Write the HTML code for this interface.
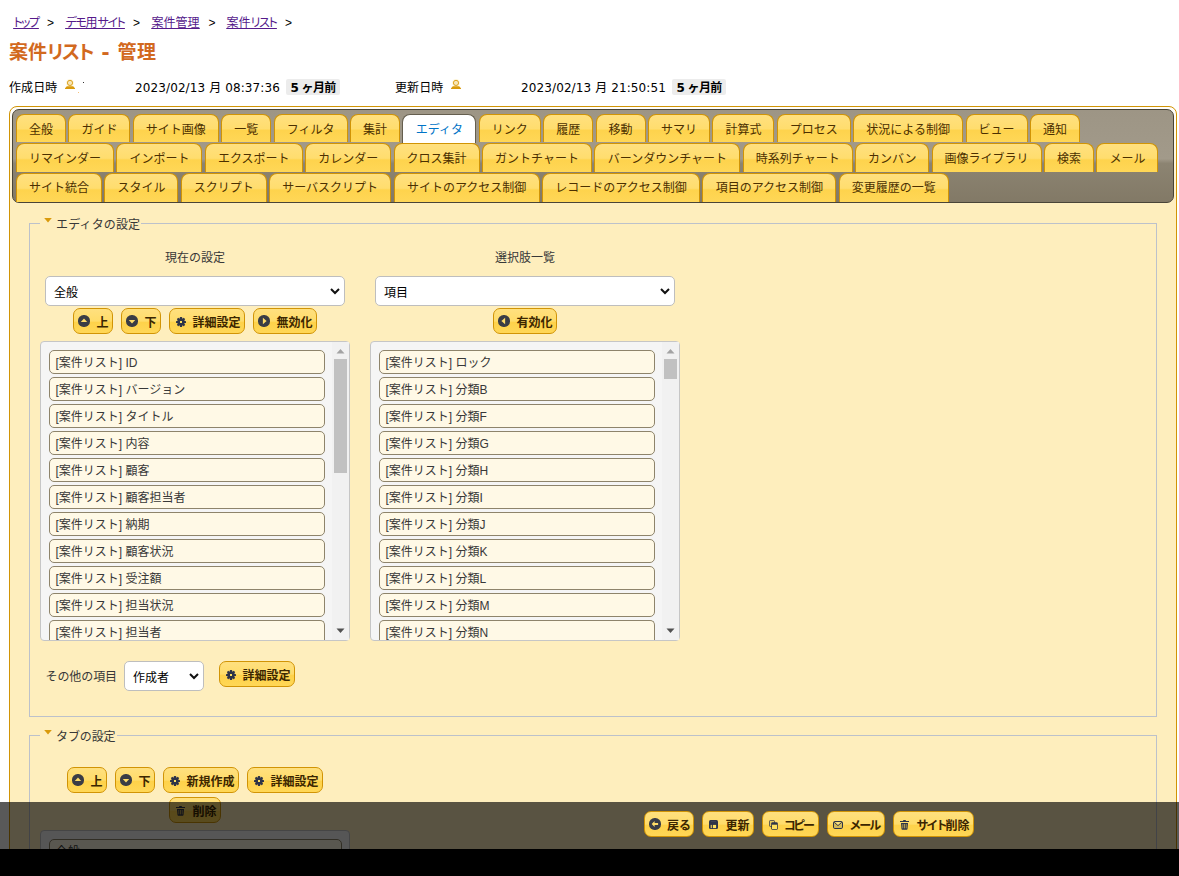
<!DOCTYPE html>
<html lang="ja"><head><meta charset="utf-8"><title>案件リスト - 管理</title>
<style>
html,body{margin:0;padding:0;background:#fff;}
body{width:1179px;height:876px;overflow:hidden;position:relative;font-family:"Liberation Sans","Noto Sans CJK JP",sans-serif;font-size:12px;color:#000;}
div,svg{position:absolute;box-sizing:content-box;}
.t{white-space:nowrap;}
.t span,.t a{position:static;color:inherit;text-decoration:inherit;}
h1{margin:0;padding:0;font:inherit;}
.i{display:block;}
.bc{color:#551a8b;text-decoration:underline;font-feature-settings:"palt";}
.gt{color:#000;}
.h1{font-size:19px;font-weight:bold;color:#d2691e;font-feature-settings:"palt";}
.tx{color:#000;}
.dt{color:#000;font-family:"DejaVu Sans","Noto Sans CJK JP",sans-serif;}
.bd{font-weight:bold;color:#000;font-family:"DejaVu Sans","Noto Sans CJK JP",sans-serif;}
.badge{background:#ececec;border-radius:2px;}
.dot{width:1px;height:1px;background:#333;}
.dot2{width:1px;height:1px;background:#f6c27c;}
.tabs{left:9px;top:106px;width:1166px;height:900px;border:1px solid #d19405;border-radius:8px;background:linear-gradient(rgba(255,255,255,.95),rgba(255,255,255,0) 100px),#feeebd;}
.hdr{left:12px;top:109px;width:1160px;height:92px;border:1px solid #494437;border-radius:7px;background:linear-gradient(#9d9585 0%,#a29a8a 53%,#8c8472 58%,#827966 100%);}
.tab{border:1px solid #d19405;border-bottom:none;border-radius:8px 8px 0 0;background:linear-gradient(#ffe07f 0%,#ffdd6e 51%,#fed34d 57%,#ffd757 100%);}
.tab.act{border-color:#655e4e;background:#fff;}
.tabt{color:#4c3000;}
.actt{color:#0074c7;}
.fs{border:1px solid #bcc1cb;}
.lgbg{background:#feeebd;}
.lg{color:#383838;}
.sel{background:#fff;border:1px solid #bebebe;border-radius:5px;}
.btn{box-sizing:border-box;border:1px solid #d19405;border-radius:7px;background:linear-gradient(#ffe07f 0%,#ffdc6a 50%,#fed24a 56%,#ffd757 100%);}
.bt{font-weight:bold;color:#3b2600;}
.lb{background:#f5f5f5;border:1px solid #c6c6c6;border-radius:4px;}
.li{background:#fff9e6;border:1px solid #8e846b;border-radius:5px;}
.lit{color:#383838;}
.sbt{background:#f1f1f1;}
.sbh{background:#c1c1c1;}
.ov{left:0;top:802px;width:1179px;height:47px;background:rgba(0,0,0,.65);}
.blk{left:0;top:849px;width:1179px;height:27px;background:#000;}
</style></head>
<body>
<div class="t bc" style="left:13.5px;top:15px;line-height:16px;"><a id="t1"><span style="letter-spacing:-1.58px">トップ</span></a></div>
<div class="t bc" style="left:65.5px;top:15px;line-height:16px;"><a id="t2"><span style="letter-spacing:-1.35px">デモ</span>用<span style="letter-spacing:-1.35px">サイト</span></a></div>
<div class="t bc" style="left:151.5px;top:15px;line-height:16px;"><a id="t3">案件管理</a></div>
<div class="t bc" style="left:226.5px;top:15px;line-height:16px;"><a id="t4">案件<span style="letter-spacing:-1.29px">リスト</span></a></div>
<div class="t gt" style="left:47px;top:15px;line-height:16px;letter-spacing:0.98px;"><span id="t5">&gt;</span></div>
<div class="t gt" style="left:133px;top:15px;line-height:16px;letter-spacing:0.98px;"><span id="t6">&gt;</span></div>
<div class="t gt" style="left:208.5px;top:15px;line-height:16px;letter-spacing:0.98px;"><span id="t7">&gt;</span></div>
<div class="t gt" style="left:285px;top:15px;line-height:16px;letter-spacing:0.98px;"><span id="t8">&gt;</span></div>
<h1>
<div class="t h1" style="left:9px;top:38.5px;line-height:28px;"><span id="t9">案件<span style="letter-spacing:-1.39px">リスト</span></span></div>
<div class="t h1" style="left:101.5px;top:37.5px;line-height:28px;letter-spacing:0.5px;font-size:24px;"><span id="t10">-</span></div>
<div class="t h1" style="left:117.5px;top:38.5px;line-height:28px;letter-spacing:0.49px;"><span id="t11">管理</span></div>
</h1>
<div class="t tx" style="left:9px;top:80px;line-height:16px;letter-spacing:0.12px;"><span id="t12">作成日時</span></div>
<svg class="i" style="left:65px;top:79px" width="10" height="10" viewBox="0 0 10 10"><circle cx="5" cy="3.9" r="3.9" fill="#fdf3d2" opacity="0.7"/><circle cx="5" cy="3.9" r="2.6" fill="#f7e6b8" stroke="#d99a0c" stroke-width="0.9"/><path d="M0 10 L0 9.3 L1.8 7.3 L8.2 7.3 L10 9.3 L10 10 Z" fill="#d99a0c"/></svg>
<div class="dot" style="left:83px;top:82px"></div><div class="dot2" style="left:78px;top:92px"></div>
<div class="t dt" style="left:135px;top:80px;line-height:16px;letter-spacing:0.11px;"><span id="t13">2023/02/13 月 08:37:36</span></div>
<div class="badge" style="left:286px;top:79px;width:54px;height:16px;"></div>
<div class="t bd" style="left:290.5px;top:80px;line-height:16px;letter-spacing:-0.71px;"><span id="t14">5 ヶ月前</span></div>
<div class="t tx" style="left:395px;top:80px;line-height:16px;letter-spacing:0.12px;"><span id="t15">更新日時</span></div>
<svg class="i" style="left:451px;top:79px" width="10" height="10" viewBox="0 0 10 10"><circle cx="5" cy="3.9" r="3.9" fill="#fdf3d2" opacity="0.7"/><circle cx="5" cy="3.9" r="2.6" fill="#f7e6b8" stroke="#d99a0c" stroke-width="0.9"/><path d="M0 10 L0 9.3 L1.8 7.3 L8.2 7.3 L10 9.3 L10 10 Z" fill="#d99a0c"/></svg>
<div class="t dt" style="left:521px;top:80px;line-height:16px;letter-spacing:0.11px;"><span id="t16">2023/02/13 月 21:50:51</span></div>
<div class="badge" style="left:672px;top:79px;width:54px;height:16px;"></div>
<div class="t bd" style="left:676.5px;top:80px;line-height:16px;letter-spacing:-0.71px;"><span id="t17">5 ヶ月前</span></div>
<div class="tabs"></div>
<div class="hdr"></div>
<div class="tab" style="left:16.0px;top:114px;width:48px;height:27px;"></div>
<div class="t tabt" style="left:16.0px;top:122px;line-height:16px;width:50px;text-align:center;"><a id="t18">全般</a></div>
<div class="tab" style="left:68.4px;top:114px;width:60px;height:27px;"></div>
<div class="t tabt" style="left:68.4px;top:122px;line-height:16px;width:62px;text-align:center;"><a id="t19">ガイド</a></div>
<div class="tab" style="left:132.8px;top:114px;width:84px;height:27px;"></div>
<div class="t tabt" style="left:132.8px;top:122px;line-height:16px;width:86px;text-align:center;"><a id="t20">サイト画像</a></div>
<div class="tab" style="left:221.2px;top:114px;width:48px;height:27px;"></div>
<div class="t tabt" style="left:221.2px;top:122px;line-height:16px;width:50px;text-align:center;"><a id="t21">一覧</a></div>
<div class="tab" style="left:273.6px;top:114px;width:72px;height:27px;"></div>
<div class="t tabt" style="left:273.6px;top:122px;line-height:16px;width:74px;text-align:center;"><a id="t22">フィルタ</a></div>
<div class="tab" style="left:350.0px;top:114px;width:48px;height:27px;"></div>
<div class="t tabt" style="left:350.0px;top:122px;line-height:16px;width:50px;text-align:center;"><a id="t23">集計</a></div>
<div class="tab act" style="left:402.4px;top:114px;width:72px;height:28px;"></div>
<div class="t tabt actt" style="left:402.4px;top:122px;line-height:16px;width:74px;text-align:center;"><a id="t24">エディタ</a></div>
<div class="tab" style="left:478.8px;top:114px;width:60px;height:27px;"></div>
<div class="t tabt" style="left:478.8px;top:122px;line-height:16px;width:62px;text-align:center;"><a id="t25">リンク</a></div>
<div class="tab" style="left:543.2px;top:114px;width:48px;height:27px;"></div>
<div class="t tabt" style="left:543.2px;top:122px;line-height:16px;width:50px;text-align:center;"><a id="t26">履歴</a></div>
<div class="tab" style="left:595.6px;top:114px;width:48px;height:27px;"></div>
<div class="t tabt" style="left:595.6px;top:122px;line-height:16px;width:50px;text-align:center;"><a id="t27">移動</a></div>
<div class="tab" style="left:648.0px;top:114px;width:60px;height:27px;"></div>
<div class="t tabt" style="left:648.0px;top:122px;line-height:16px;width:62px;text-align:center;"><a id="t28">サマリ</a></div>
<div class="tab" style="left:712.4px;top:114px;width:60px;height:27px;"></div>
<div class="t tabt" style="left:712.4px;top:122px;line-height:16px;width:62px;text-align:center;"><a id="t29">計算式</a></div>
<div class="tab" style="left:776.8px;top:114px;width:72px;height:27px;"></div>
<div class="t tabt" style="left:776.8px;top:122px;line-height:16px;width:74px;text-align:center;"><a id="t30">プロセス</a></div>
<div class="tab" style="left:853.2px;top:114px;width:108px;height:27px;"></div>
<div class="t tabt" style="left:853.2px;top:122px;line-height:16px;width:110px;text-align:center;"><a id="t31">状況による制御</a></div>
<div class="tab" style="left:965.6px;top:114px;width:60px;height:27px;"></div>
<div class="t tabt" style="left:965.6px;top:122px;line-height:16px;width:62px;text-align:center;"><a id="t32">ビュー</a></div>
<div class="tab" style="left:1030.0px;top:114px;width:48px;height:27px;"></div>
<div class="t tabt" style="left:1030.0px;top:122px;line-height:16px;width:50px;text-align:center;"><a id="t33">通知</a></div>
<div class="tab" style="left:16.0px;top:143px;width:96px;height:28px;"></div>
<div class="t tabt" style="left:16.0px;top:151px;line-height:16px;width:98px;text-align:center;"><a id="t34">リマインダー</a></div>
<div class="tab" style="left:116.4px;top:143px;width:84px;height:28px;"></div>
<div class="t tabt" style="left:116.4px;top:151px;line-height:16px;width:86px;text-align:center;"><a id="t35">インポート</a></div>
<div class="tab" style="left:204.8px;top:143px;width:96px;height:28px;"></div>
<div class="t tabt" style="left:204.8px;top:151px;line-height:16px;width:98px;text-align:center;"><a id="t36">エクスポート</a></div>
<div class="tab" style="left:305.2px;top:143px;width:84px;height:28px;"></div>
<div class="t tabt" style="left:305.2px;top:151px;line-height:16px;width:86px;text-align:center;"><a id="t37">カレンダー</a></div>
<div class="tab" style="left:393.6px;top:143px;width:84px;height:28px;"></div>
<div class="t tabt" style="left:393.6px;top:151px;line-height:16px;width:86px;text-align:center;"><a id="t38">クロス集計</a></div>
<div class="tab" style="left:482.0px;top:143px;width:108px;height:28px;"></div>
<div class="t tabt" style="left:482.0px;top:151px;line-height:16px;width:110px;text-align:center;"><a id="t39">ガントチャート</a></div>
<div class="tab" style="left:594.4px;top:143px;width:144px;height:28px;"></div>
<div class="t tabt" style="left:594.4px;top:151px;line-height:16px;width:146px;text-align:center;"><a id="t40">バーンダウンチャート</a></div>
<div class="tab" style="left:742.8px;top:143px;width:108px;height:28px;"></div>
<div class="t tabt" style="left:742.8px;top:151px;line-height:16px;width:110px;text-align:center;"><a id="t41">時系列チャート</a></div>
<div class="tab" style="left:855.2px;top:143px;width:72px;height:28px;"></div>
<div class="t tabt" style="left:855.2px;top:151px;line-height:16px;width:74px;text-align:center;"><a id="t42">カンバン</a></div>
<div class="tab" style="left:931.6px;top:143px;width:108px;height:28px;"></div>
<div class="t tabt" style="left:931.6px;top:151px;line-height:16px;width:110px;text-align:center;"><a id="t43">画像ライブラリ</a></div>
<div class="tab" style="left:1044.0px;top:143px;width:48px;height:28px;"></div>
<div class="t tabt" style="left:1044.0px;top:151px;line-height:16px;width:50px;text-align:center;"><a id="t44">検索</a></div>
<div class="tab" style="left:1096.4px;top:143px;width:60px;height:28px;"></div>
<div class="t tabt" style="left:1096.4px;top:151px;line-height:16px;width:62px;text-align:center;"><a id="t45">メール</a></div>
<div class="tab" style="left:16.0px;top:173px;width:84px;height:28px;"></div>
<div class="t tabt" style="left:16.0px;top:180.2px;line-height:16px;width:86px;text-align:center;"><a id="t46">サイト統合</a></div>
<div class="tab" style="left:104.4px;top:173px;width:72px;height:28px;"></div>
<div class="t tabt" style="left:104.4px;top:180.2px;line-height:16px;width:74px;text-align:center;"><a id="t47">スタイル</a></div>
<div class="tab" style="left:180.8px;top:173px;width:84px;height:28px;"></div>
<div class="t tabt" style="left:180.8px;top:180.2px;line-height:16px;width:86px;text-align:center;"><a id="t48">スクリプト</a></div>
<div class="tab" style="left:269.2px;top:173px;width:120px;height:28px;"></div>
<div class="t tabt" style="left:269.2px;top:180.2px;line-height:16px;width:122px;text-align:center;"><a id="t49">サーバスクリプト</a></div>
<div class="tab" style="left:393.6px;top:173px;width:144px;height:28px;"></div>
<div class="t tabt" style="left:393.6px;top:180.2px;line-height:16px;width:146px;text-align:center;"><a id="t50">サイトのアクセス制御</a></div>
<div class="tab" style="left:542.0px;top:173px;width:156px;height:28px;"></div>
<div class="t tabt" style="left:542.0px;top:180.2px;line-height:16px;width:158px;text-align:center;"><a id="t51">レコードのアクセス制御</a></div>
<div class="tab" style="left:702.4px;top:173px;width:132px;height:28px;"></div>
<div class="t tabt" style="left:702.4px;top:180.2px;line-height:16px;width:134px;text-align:center;"><a id="t52">項目のアクセス制御</a></div>
<div class="tab" style="left:838.8px;top:173px;width:108px;height:28px;"></div>
<div class="t tabt" style="left:838.8px;top:180.2px;line-height:16px;width:110px;text-align:center;"><a id="t53">変更履歴の一覧</a></div>
<div class="fs" style="left:29px;top:223px;width:1126px;height:492px;"></div>
<div class="lgbg" style="left:40px;top:215px;width:101px;height:16px;"></div>
<svg class="i" style="left:44px;top:218px" width="8" height="5" viewBox="0 0 8 5"><path d="M0.2 0 L7.8 0 L4 4.6 Z" fill="#d99a0c"/></svg>
<div class="t lg" style="left:56px;top:216.5px;line-height:16px;letter-spacing:0.16px;"><span id="t54">エディタの設定</span></div>
<div class="t lg" style="left:45px;top:249.5px;line-height:16px;width:300px;text-align:center;"><span id="t55">現在の設定</span></div>
<div class="t lg" style="left:375px;top:249.5px;line-height:16px;width:300px;text-align:center;"><span id="t56">選択肢一覧</span></div>
<div class="sel" style="left:45px;top:276px;width:298px;height:28px;"></div>
<div class="t tx" style="left:54px;top:285px;line-height:16px;"><span id="t57">全般</span></div>
<svg class="i" style="left:330px;top:288px" width="10" height="7" viewBox="0 0 10 7"><path d="M1 1 L5 5 L9 1" fill="none" stroke="#111" stroke-width="2"/></svg>
<div class="sel" style="left:375px;top:276px;width:298px;height:28px;"></div>
<div class="t tx" style="left:384px;top:285px;line-height:16px;"><span id="t58">項目</span></div>
<svg class="i" style="left:660px;top:288px" width="10" height="7" viewBox="0 0 10 7"><path d="M1 1 L5 5 L9 1" fill="none" stroke="#111" stroke-width="2"/></svg>
<div class="btn" style="left:73px;top:308px;width:40px;height:26px;"></div>
<svg class="i" style="left:78px;top:315px" width="12" height="12" viewBox="0 0 12 12"><rect x="0" y="0" width="12" height="12" rx="5.6" fill="#3a3c45"/><path d="M6 3.4 L9.2 7.1 L2.8 7.1 Z" fill="#ffdc68"/></svg>
<div class="t bt" style="left:96.5px;top:315px;line-height:16px;"><span id="t59">上</span></div>
<div class="btn" style="left:121px;top:308px;width:40px;height:26px;"></div>
<svg class="i" style="left:126px;top:315px" width="12" height="12" viewBox="0 0 12 12"><rect x="0" y="0" width="12" height="12" rx="5.6" fill="#3a3c45"/><path d="M6 8.6 L9.2 4.9 L2.8 4.9 Z" fill="#ffdc68"/></svg>
<div class="t bt" style="left:144.5px;top:315px;line-height:16px;"><span id="t60">下</span></div>
<div class="btn" style="left:169px;top:308px;width:76px;height:26px;"></div>
<svg class="i" style="left:176px;top:317px" width="10" height="10" viewBox="0 0 10 10"><rect x="3.9" y="0" width="2.2" height="10" rx="0.5" transform="rotate(0 5 5)" fill="#2e3448"/><rect x="3.9" y="0" width="2.2" height="10" rx="0.5" transform="rotate(45 5 5)" fill="#2e3448"/><rect x="3.9" y="0" width="2.2" height="10" rx="0.5" transform="rotate(90 5 5)" fill="#2e3448"/><rect x="3.9" y="0" width="2.2" height="10" rx="0.5" transform="rotate(135 5 5)" fill="#2e3448"/><circle cx="5" cy="5" r="3.7" fill="#2e3448"/><rect x="4" y="4" width="2" height="2" fill="#ffe25e"/></svg>
<div class="t bt" style="left:192.5px;top:315px;line-height:16px;"><span id="t61">詳細設定</span></div>
<div class="btn" style="left:253px;top:308px;width:64px;height:26px;"></div>
<svg class="i" style="left:258px;top:315px" width="12" height="12" viewBox="0 0 12 12"><rect x="0" y="0" width="12" height="12" rx="5.6" fill="#3a3c45"/><path d="M8.6 6 L4.9 9.2 L4.9 2.8 Z" fill="#ffdc68"/></svg>
<div class="t bt" style="left:276.5px;top:315px;line-height:16px;"><span id="t62">無効化</span></div>
<div class="btn" style="left:493px;top:308px;width:64px;height:26px;"></div>
<svg class="i" style="left:498px;top:315px" width="12" height="12" viewBox="0 0 12 12"><rect x="0" y="0" width="12" height="12" rx="5.6" fill="#3a3c45"/><path d="M3.4 6 L7.1 9.2 L7.1 2.8 Z" fill="#ffdc68"/></svg>
<div class="t bt" style="left:516.5px;top:315px;line-height:16px;"><span id="t63">有効化</span></div>
<div class="lb" style="left:40px;top:341px;width:308px;height:298px;"></div>
<div class="li" style="left:49px;top:350px;width:274px;height:22px;"></div>
<div class="t lit" style="left:55.5px;top:355px;line-height:16px;"><span id="t64">[案件リスト] ID</span></div>
<div class="li" style="left:49px;top:377px;width:274px;height:22px;"></div>
<div class="t lit" style="left:55.5px;top:382px;line-height:16px;"><span id="t65">[案件リスト] バージョン</span></div>
<div class="li" style="left:49px;top:404px;width:274px;height:22px;"></div>
<div class="t lit" style="left:55.5px;top:409px;line-height:16px;"><span id="t66">[案件リスト] タイトル</span></div>
<div class="li" style="left:49px;top:431px;width:274px;height:22px;"></div>
<div class="t lit" style="left:55.5px;top:436px;line-height:16px;"><span id="t67">[案件リスト] 内容</span></div>
<div class="li" style="left:49px;top:458px;width:274px;height:22px;"></div>
<div class="t lit" style="left:55.5px;top:463px;line-height:16px;"><span id="t68">[案件リスト] 顧客</span></div>
<div class="li" style="left:49px;top:485px;width:274px;height:22px;"></div>
<div class="t lit" style="left:55.5px;top:490px;line-height:16px;"><span id="t69">[案件リスト] 顧客担当者</span></div>
<div class="li" style="left:49px;top:512px;width:274px;height:22px;"></div>
<div class="t lit" style="left:55.5px;top:517px;line-height:16px;"><span id="t70">[案件リスト] 納期</span></div>
<div class="li" style="left:49px;top:539px;width:274px;height:22px;"></div>
<div class="t lit" style="left:55.5px;top:544px;line-height:16px;"><span id="t71">[案件リスト] 顧客状況</span></div>
<div class="li" style="left:49px;top:566px;width:274px;height:22px;"></div>
<div class="t lit" style="left:55.5px;top:571px;line-height:16px;"><span id="t72">[案件リスト] 受注額</span></div>
<div class="li" style="left:49px;top:593px;width:274px;height:22px;"></div>
<div class="t lit" style="left:55.5px;top:598px;line-height:16px;"><span id="t73">[案件リスト] 担当状況</span></div>
<div class="li" style="left:49px;top:620px;width:274px;height:20px;border-bottom:none;border-radius:5px 5px 0 0;height:19px"></div>
<div class="t lit" style="left:55.5px;top:625px;line-height:16px;"><span id="t74">[案件リスト] 担当者</span></div>
<div class="sbt" style="left:332px;top:342px;width:17px;height:298px;"></div>
<div class="sbh" style="left:334px;top:359px;width:13px;height:114px;"></div>
<svg class="i" style="left:336px;top:348px" width="9" height="6" viewBox="0 0 9 6"><path d="M0.5 5.5 L4.5 1 L8.5 5.5 Z" fill="#a3a3a3"/></svg>
<svg class="i" style="left:336px;top:628px" width="9" height="6" viewBox="0 0 9 6"><path d="M0.5 0.5 L4.5 5 L8.5 0.5 Z" fill="#505050"/></svg>
<div class="lb" style="left:370px;top:341px;width:308px;height:298px;"></div>
<div class="li" style="left:379px;top:350px;width:274px;height:22px;"></div>
<div class="t lit" style="left:385.5px;top:355px;line-height:16px;"><span id="t75">[案件リスト] ロック</span></div>
<div class="li" style="left:379px;top:377px;width:274px;height:22px;"></div>
<div class="t lit" style="left:385.5px;top:382px;line-height:16px;"><span id="t76">[案件リスト] 分類B</span></div>
<div class="li" style="left:379px;top:404px;width:274px;height:22px;"></div>
<div class="t lit" style="left:385.5px;top:409px;line-height:16px;"><span id="t77">[案件リスト] 分類F</span></div>
<div class="li" style="left:379px;top:431px;width:274px;height:22px;"></div>
<div class="t lit" style="left:385.5px;top:436px;line-height:16px;"><span id="t78">[案件リスト] 分類G</span></div>
<div class="li" style="left:379px;top:458px;width:274px;height:22px;"></div>
<div class="t lit" style="left:385.5px;top:463px;line-height:16px;"><span id="t79">[案件リスト] 分類H</span></div>
<div class="li" style="left:379px;top:485px;width:274px;height:22px;"></div>
<div class="t lit" style="left:385.5px;top:490px;line-height:16px;"><span id="t80">[案件リスト] 分類I</span></div>
<div class="li" style="left:379px;top:512px;width:274px;height:22px;"></div>
<div class="t lit" style="left:385.5px;top:517px;line-height:16px;"><span id="t81">[案件リスト] 分類J</span></div>
<div class="li" style="left:379px;top:539px;width:274px;height:22px;"></div>
<div class="t lit" style="left:385.5px;top:544px;line-height:16px;"><span id="t82">[案件リスト] 分類K</span></div>
<div class="li" style="left:379px;top:566px;width:274px;height:22px;"></div>
<div class="t lit" style="left:385.5px;top:571px;line-height:16px;"><span id="t83">[案件リスト] 分類L</span></div>
<div class="li" style="left:379px;top:593px;width:274px;height:22px;"></div>
<div class="t lit" style="left:385.5px;top:598px;line-height:16px;"><span id="t84">[案件リスト] 分類M</span></div>
<div class="li" style="left:379px;top:620px;width:274px;height:20px;border-bottom:none;border-radius:5px 5px 0 0;height:19px"></div>
<div class="t lit" style="left:385.5px;top:625px;line-height:16px;"><span id="t85">[案件リスト] 分類N</span></div>
<div class="sbt" style="left:662px;top:342px;width:17px;height:298px;"></div>
<div class="sbh" style="left:664px;top:359px;width:13px;height:20px;"></div>
<svg class="i" style="left:666px;top:348px" width="9" height="6" viewBox="0 0 9 6"><path d="M0.5 5.5 L4.5 1 L8.5 5.5 Z" fill="#a3a3a3"/></svg>
<svg class="i" style="left:666px;top:628px" width="9" height="6" viewBox="0 0 9 6"><path d="M0.5 0.5 L4.5 5 L8.5 0.5 Z" fill="#505050"/></svg>
<div class="t lg" style="left:45.5px;top:669px;line-height:16px;letter-spacing:-0.09px;"><span id="t86">その他の項目</span></div>
<div class="sel" style="left:124px;top:661px;width:78px;height:28px;"></div>
<div class="t tx" style="left:133px;top:670px;line-height:16px;"><span id="t87">作成者</span></div>
<svg class="i" style="left:189px;top:673px" width="10" height="7" viewBox="0 0 10 7"><path d="M1 1 L5 5 L9 1" fill="none" stroke="#111" stroke-width="2"/></svg>
<div class="btn" style="left:219px;top:661px;width:76px;height:26px;"></div>
<svg class="i" style="left:226px;top:670px" width="10" height="10" viewBox="0 0 10 10"><rect x="3.9" y="0" width="2.2" height="10" rx="0.5" transform="rotate(0 5 5)" fill="#2e3448"/><rect x="3.9" y="0" width="2.2" height="10" rx="0.5" transform="rotate(45 5 5)" fill="#2e3448"/><rect x="3.9" y="0" width="2.2" height="10" rx="0.5" transform="rotate(90 5 5)" fill="#2e3448"/><rect x="3.9" y="0" width="2.2" height="10" rx="0.5" transform="rotate(135 5 5)" fill="#2e3448"/><circle cx="5" cy="5" r="3.7" fill="#2e3448"/><rect x="4" y="4" width="2" height="2" fill="#ffe25e"/></svg>
<div class="t bt" style="left:242.5px;top:668px;line-height:16px;"><span id="t88">詳細設定</span></div>
<div class="fs" style="left:29px;top:735px;width:1126px;height:200px;"></div>
<div class="lgbg" style="left:40px;top:727px;width:77px;height:16px;"></div>
<svg class="i" style="left:44px;top:730px" width="8" height="5" viewBox="0 0 8 5"><path d="M0.2 0 L7.8 0 L4 4.6 Z" fill="#d99a0c"/></svg>
<div class="t lg" style="left:56px;top:728.5px;line-height:16px;letter-spacing:-0.1px;"><span id="t89">タブの設定</span></div>
<div class="btn" style="left:67px;top:767px;width:40px;height:26px;"></div>
<svg class="i" style="left:72px;top:774px" width="12" height="12" viewBox="0 0 12 12"><rect x="0" y="0" width="12" height="12" rx="5.6" fill="#3a3c45"/><path d="M6 3.4 L9.2 7.1 L2.8 7.1 Z" fill="#ffdc68"/></svg>
<div class="t bt" style="left:90.5px;top:774px;line-height:16px;"><span id="t90">上</span></div>
<div class="btn" style="left:115px;top:767px;width:40px;height:26px;"></div>
<svg class="i" style="left:120px;top:774px" width="12" height="12" viewBox="0 0 12 12"><rect x="0" y="0" width="12" height="12" rx="5.6" fill="#3a3c45"/><path d="M6 8.6 L9.2 4.9 L2.8 4.9 Z" fill="#ffdc68"/></svg>
<div class="t bt" style="left:138.5px;top:774px;line-height:16px;"><span id="t91">下</span></div>
<div class="btn" style="left:163px;top:767px;width:76px;height:26px;"></div>
<svg class="i" style="left:170px;top:776px" width="10" height="10" viewBox="0 0 10 10"><rect x="3.9" y="0" width="2.2" height="10" rx="0.5" transform="rotate(0 5 5)" fill="#2e3448"/><rect x="3.9" y="0" width="2.2" height="10" rx="0.5" transform="rotate(45 5 5)" fill="#2e3448"/><rect x="3.9" y="0" width="2.2" height="10" rx="0.5" transform="rotate(90 5 5)" fill="#2e3448"/><rect x="3.9" y="0" width="2.2" height="10" rx="0.5" transform="rotate(135 5 5)" fill="#2e3448"/><circle cx="5" cy="5" r="3.7" fill="#2e3448"/><rect x="4" y="4" width="2" height="2" fill="#ffe25e"/></svg>
<div class="t bt" style="left:186.5px;top:774px;line-height:16px;"><span id="t92">新規作成</span></div>
<div class="btn" style="left:247px;top:767px;width:76px;height:26px;"></div>
<svg class="i" style="left:254px;top:776px" width="10" height="10" viewBox="0 0 10 10"><rect x="3.9" y="0" width="2.2" height="10" rx="0.5" transform="rotate(0 5 5)" fill="#2e3448"/><rect x="3.9" y="0" width="2.2" height="10" rx="0.5" transform="rotate(45 5 5)" fill="#2e3448"/><rect x="3.9" y="0" width="2.2" height="10" rx="0.5" transform="rotate(90 5 5)" fill="#2e3448"/><rect x="3.9" y="0" width="2.2" height="10" rx="0.5" transform="rotate(135 5 5)" fill="#2e3448"/><circle cx="5" cy="5" r="3.7" fill="#2e3448"/><rect x="4" y="4" width="2" height="2" fill="#ffe25e"/></svg>
<div class="t bt" style="left:270.5px;top:774px;line-height:16px;"><span id="t93">詳細設定</span></div>
<div class="btn" style="left:169px;top:797px;width:52px;height:26px;"></div>
<svg class="i" style="left:176px;top:806px" width="9" height="10" viewBox="0 0 9 10"><path d="M3.2 0h2.6v1h-2.6z M0 0.9h9v1.1h-9z M1 3h7l-0.5 6a0.9 0.9 0 0 1 -0.9 0.8h-4.2a0.9 0.9 0 0 1 -0.9 -0.8z" fill="#2e3448"/><path d="M2.8 4v4.4 M4.5 4v4.4 M6.2 4v4.4" stroke="#e8c455" stroke-width="0.7"/></svg>
<div class="t bt" style="left:192.5px;top:804px;line-height:16px;"><span id="t94">削除</span></div>
<div class="lb" style="left:40px;top:830px;width:308px;height:60px;"></div>
<div class="li" style="left:49px;top:839px;width:291px;height:22px;"></div>
<div class="t lit" style="left:55.5px;top:844px;line-height:16px;"><span id="t95">全般</span></div>
<div class="ov"></div>
<div class="btn" style="left:644px;top:811px;width:50px;height:26px;"></div>
<svg class="i" style="left:649px;top:818px" width="12" height="12" viewBox="0 0 12 12"><rect x="0" y="0" width="12" height="12" rx="5.6" fill="#3a3c45"/><path d="M2.7 6 L5.6 3 L5.6 5 L9.1 5 L9.1 7 L5.6 7 L5.6 9 Z" fill="#ffdc68"/></svg>
<div class="t bt" style="left:667.0px;top:818px;line-height:16px;"><span id="t96">戻<span style="letter-spacing:-2.02px">る</span></span></div>
<div class="btn" style="left:702px;top:811px;width:52px;height:26px;"></div>
<svg class="i" style="left:709px;top:820px" width="9" height="9" viewBox="0 0 9 9"><rect x="0" y="0" width="9" height="9" rx="1.5" fill="#2e3448"/><rect x="1.7" y="4.9" width="1.1" height="3.2" fill="#f7d860"/><rect x="3.9" y="4.9" width="3.2" height="3.2" fill="#ffe15e"/><rect x="2" y="1.2" width="5" height="0.5" fill="#4a4f60"/></svg>
<div class="t bt" style="left:725.5px;top:818px;line-height:16px;"><span id="t97">更新</span></div>
<div class="btn" style="left:762px;top:811px;width:57px;height:26px;"></div>
<svg class="i" style="left:769px;top:820px" width="9" height="10" viewBox="0 0 9 10"><rect x="0.4" y="0.4" width="5.2" height="6.2" rx="1.3" fill="#e6c85e" stroke="#2e3448" stroke-width="0.8"/><rect x="2.2" y="2.2" width="6.6" height="7.6" rx="1.4" fill="#2e3448"/><rect x="3" y="4.7" width="5" height="4.3" fill="#ffe15e"/></svg>
<div class="t bt" style="left:783.7px;top:818px;line-height:16px;"><span id="t98"><span style="letter-spacing:-2.34px">コピー</span></span></div>
<div class="btn" style="left:827px;top:811px;width:58px;height:26px;"></div>
<svg class="i" style="left:833px;top:821px" width="10" height="8" viewBox="0 0 10 8"><rect x="0.5" y="0.5" width="9" height="7" rx="1.3" fill="#d3b95a" stroke="#2e3448" stroke-width="1"/><path d="M1.4 1.2 L5 4.4 L8.6 1.2 Z" fill="#ffe680"/><path d="M1.2 1.2 L5 4.6 L8.8 1.2" fill="none" stroke="#2e3448" stroke-width="1"/></svg>
<div class="t bt" style="left:849.3px;top:818px;line-height:16px;"><span id="t99"><span style="letter-spacing:-2.01px">メール</span></span></div>
<div class="btn" style="left:893px;top:811px;width:81px;height:26px;"></div>
<svg class="i" style="left:900px;top:820px" width="9" height="10" viewBox="0 0 9 10"><path d="M3.2 0h2.6v1h-2.6z M0 0.9h9v1.1h-9z M1 3h7l-0.5 6a0.9 0.9 0 0 1 -0.9 0.8h-4.2a0.9 0.9 0 0 1 -0.9 -0.8z" fill="#2e3448"/><path d="M2.8 4v4.4 M4.5 4v4.4 M6.2 4v4.4" stroke="#e8c455" stroke-width="0.7"/></svg>
<div class="t bt" style="left:916.5px;top:818px;line-height:16px;"><span id="t100"><span style="letter-spacing:-2.34px">サイト</span>削除</span></div>
<div class="blk"></div>
</body></html>
